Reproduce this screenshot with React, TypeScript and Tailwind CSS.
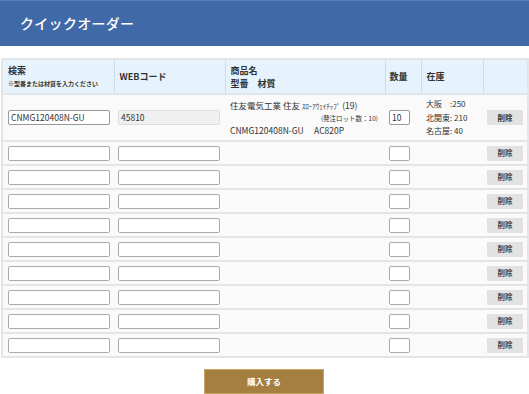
const emptyRows = Array.from({ length: 9 }, (_, i) => i);

const font = { fontFamily: '"Noto Sans CJK JP", "Noto Sans", sans-serif' };

export default function App() {
  return (
    <div className="w-[529px] h-[394px] bg-white overflow-hidden" style={font}>
      <div className="h-[46px] bg-[#4069a7] border-t border-[#5a7fb8] flex items-center pl-[20px]">
        <h1 className="text-white text-[14px] font-medium tracking-[0.3px]">クイックオーダー</h1>
      </div>

      <div className="mt-[12px] ml-[1px] w-[526px]">
        <table className="w-full border-collapse table-fixed text-[#333]">
          <colgroup>
            <col className="w-[112px]" />
            <col className="w-[111px]" />
            <col className="w-[160px]" />
            <col className="w-[36px]" />
            <col className="w-[62px]" />
            <col className="w-[45px]" />
          </colgroup>
          <thead>
            <tr className="h-[35px] bg-[#e6f3fd] border-2 border-[#e3e6e9]">
              <th className="text-left align-middle px-[5px] border-r border-[#c9dcec] font-bold">
                <div className="text-[9px] leading-[12px]">検索</div>
                <div className="text-[6px] leading-[10px] mt-[2px]">※型番または材質を入力ください</div>
              </th>
              <th className="text-left align-middle px-[5px] border-r border-[#c9dcec] text-[9px] font-bold">
                WEBコード
              </th>
              <th className="text-left align-middle px-[5px] border-r border-[#c9dcec] font-bold text-[9px] leading-[13px]">
                <div>商品名</div>
                <div>型番　材質</div>
              </th>
              <th className="text-left align-middle px-[4px] border-r border-[#c9dcec] text-[9px] font-bold">
                数量
              </th>
              <th className="text-left align-middle px-[5px] border-r border-[#c9dcec] text-[9px] font-bold">
                在庫
              </th>
              <th></th>
            </tr>
          </thead>
          <tbody>
            <tr className="h-[47px] bg-[#fafafa] border-2 border-t-0 border-[#e3e6e9]">
              <td className="px-[5px] align-middle">
                <div className="h-[15px] w-[102px] border border-[#999] rounded-[2px] bg-white text-[8.5px] leading-[13px] px-[2px]">
                  CNMG120408N-GU
                </div>
              </td>
              <td className="px-[4px] align-middle">
                <div className="h-[15px] w-[102px] border border-[#ddd] rounded-[2px] bg-[#f0f0f0] text-[8.5px] leading-[13px] px-[2px]">
                  45810
                </div>
              </td>
              <td className="px-[5px] align-middle text-[8.5px]">
                <div className="leading-[12px]">
                  住友電気工業 住友 <span className="text-[7px]">ｽﾛｰｱｳｪｲﾁｯﾌﾟ</span> (19)
                </div>
                <div className="text-right text-[6.5px] leading-[9px] pr-[2px] mt-[2px]">(発注ロット数：10)</div>
                <div className="leading-[12px] mt-[1px]">CNMG120408N-GU　 AC820P</div>
              </td>
              <td className="px-[4px] align-middle">
                <div className="h-[15px] w-[21px] border border-[#999] rounded-[2px] bg-white text-[8.5px] leading-[13px] px-[2px]">
                  10
                </div>
              </td>
              <td className="px-[5px] align-middle text-[8px] leading-[13.5px]">
                <div>大阪　:250</div>
                <div>北関東: 210</div>
                <div>名古屋: 40</div>
              </td>
              <td className="px-[4px] align-middle">
                <div className="h-[15px] w-[36px] bg-[#e2e2e2] text-[7.5px] font-bold flex items-center justify-center">
                  削除
                </div>
              </td>
            </tr>
            {emptyRows.map((i) => (
              <tr key={i} className="h-[24px] bg-[#fafafa] border-2 border-t-0 border-[#e3e6e9]">
                <td className="px-[5px] align-middle">
                  <div className="h-[15px] w-[102px] border border-[#aaa] rounded-[2px] bg-white" />
                </td>
                <td className="px-[4px] align-middle">
                  <div className="h-[15px] w-[102px] border border-[#aaa] rounded-[2px] bg-white" />
                </td>
                <td></td>
                <td className="px-[4px] align-middle">
                  <div className="h-[15px] w-[21px] border border-[#aaa] rounded-[2px] bg-white" />
                </td>
                <td></td>
                <td className="px-[4px] align-middle">
                  <div className="h-[15px] w-[36px] bg-[#e2e2e2] text-[7.5px] font-bold text-[#444] flex items-center justify-center">
                    削除
                  </div>
                </td>
              </tr>
            ))}
          </tbody>
        </table>
      </div>

      <div className="flex justify-center mt-[11px] pr-[1px]">
        <button className="w-[120px] h-[25px] bg-[#a47f3f] border border-[#c9a865] text-white text-[8.5px] font-bold">
          購入する
        </button>
      </div>
    </div>
  );
}
